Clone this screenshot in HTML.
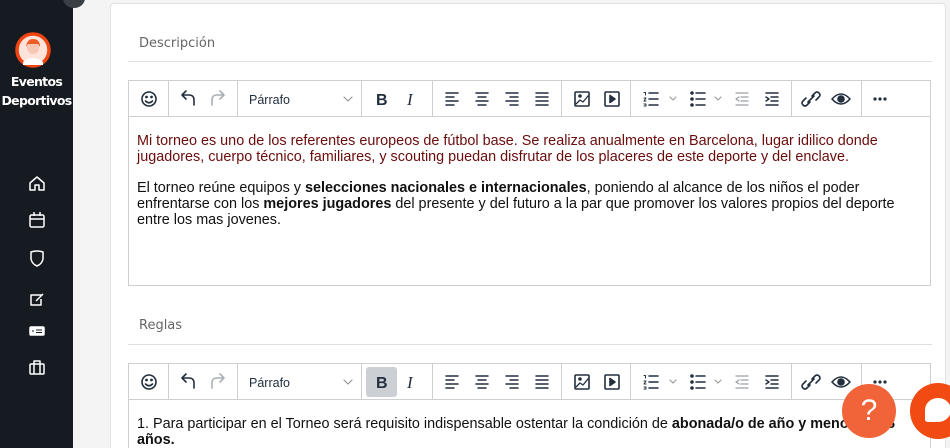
<!DOCTYPE html>
<html style="overflow:hidden;height:448px"><head><meta charset="utf-8"><style>
*{margin:0;padding:0;box-sizing:border-box}
body{width:950px;height:448px;overflow:hidden;background:#f4f4f4;font-family:"Liberation Sans",Arial,sans-serif;position:relative}
.side{position:absolute;left:0;top:0;width:73px;height:448px;background:#161b21}
.brand{position:absolute;left:0;width:73px;text-align:center;color:#fff;font-weight:bold;font-size:12.5px;line-height:19px;top:72px;font-family:"DejaVu Sans",sans-serif;letter-spacing:-0.7px}
.card{position:absolute;left:110px;top:3px;width:836px;height:460px;background:#fff;border:1px solid #e2e2e2;border-radius:4px}
.lbl{position:absolute;left:139px;color:#666;font-family:"DejaVu Sans",sans-serif;font-size:13px}
.hr{position:absolute;left:128px;width:804px;height:1px;background:#e0e0e0}
.ed{position:absolute;left:128px;width:803px;border:1px solid #cfcfcf;background:#fff;overflow:hidden}
.tb{height:36px;border-bottom:1px solid #cfcfcf;display:block}
.txt{padding:16px 8px 0 8px;font-size:14.4px;line-height:16px;color:#111}
.txt p{margin-bottom:15px}
.fab{position:absolute;border-radius:50%}
</style></head><body>
<div class="side">
 <div style="position:absolute;left:63px;top:-12px;width:22px;height:20px;border-radius:50%;background:#3a3f45"></div>
 <svg style="position:absolute;left:15px;top:32px" width="36" height="36" viewBox="0 0 36 36">
  <circle cx="18" cy="18" r="16" fill="#fde3da" stroke="#f04510" stroke-width="3.5"/>
  <path d="M8 30 Q18 22 28 30 L28 33 L8 33Z" fill="#fff"/>
  <circle cx="18" cy="16" r="6" fill="#f6c7b5"/>
  <path d="M11 15 Q12 7 18 7 Q25 7 25 15 L23 12 L13 12Z" fill="#f05a25"/>
 </svg>
 <div class="brand">Eventos<br>Deportivos</div>
 <svg style="position:absolute;left:28px;top:174px" width="18" height="205" viewBox="0 0 18 205" fill="none" stroke="#fff" stroke-width="1.5" stroke-linejoin="round">
  <path d="M2 9 L9 3 L16 9 V16 H11 V11 H7 V16 H2Z"/>
  <rect x="2" y="41" width="14" height="12" rx="1.5"/><path d="M2 45 H16 M6 38 V42 M12 38 V42"/>
  <path d="M3 78 Q9 76 15 78 V85 Q14 90 9 92 Q4 90 3 85Z"/>
  <path d="M14 121 H3 V131 H13 V125 M8 127 L15 120"/>
  <rect x="2" y="153" width="14" height="8" rx="1" fill="#fff"/><path d="M8 156H14M8 158.5H14M4 157H6" stroke="#161b21" stroke-width="1"/>
  <rect x="2" y="190" width="14" height="10" rx="1"/><path d="M6 190 V187 H12 V190 M6 190 V200 M12 190 V200"/>
 </svg>
</div>
<div class="card"></div>
<div class="lbl" style="top:36px">Descripción</div>
<div class="hr" style="top:61px"></div>
<div class="lbl" style="top:318px">Reglas</div>
<div class="hr" style="top:344px"></div>

<svg width="0" height="0" style="position:absolute"><defs>
<g id="tb" fill="none" stroke="#222f3e" stroke-width="1.6" stroke-linecap="round" stroke-linejoin="round">
 <g stroke="#cfcfcf" stroke-width="1"><path d="M39.5 0V36M108.5 0V36M232.5 0V36M303.5 0V36M432.5 0V36M501.5 0V36M662.5 0V36M732.5 0V36"/></g>
 <circle cx="20" cy="18" r="7"/><circle cx="17.5" cy="16" r=".6" fill="#222f3e"/><circle cx="22.5" cy="16" r=".6" fill="#222f3e"/><path d="M16.5 20 Q20 23.5 23.5 20"/>
 <path d="M53 14 H60 Q65 14 65 19 V24 M53 14 L57 10 M53 14 L57 18"/>
 <path d="M95 14 H88 Q83 14 83 19 V24 M95 14 L91 10 M95 14 L91 18" stroke="#aab0b6"/>
 <text x="120" y="23" font-family="Liberation Sans,Arial" font-size="12.5" fill="#222f3e" stroke="none">Párrafo</text>
 <path d="M215 16 L219 20 L223 16" stroke="#999" stroke-width="1.2"/>
 <text x="247" y="24" font-family="Liberation Sans,Arial" font-size="16" font-weight="bold" fill="#222f3e" stroke="none">B</text>
 <text x="278" y="24" font-family="Liberation Serif,serif" font-size="17" font-style="italic" fill="#222f3e" stroke="none">I</text>
 <g stroke-width="1.5"><path d="M317 12H329M317 16H325M317 20H329M317 24H325"/>
 <path d="M347 12H359M349 16H357M347 20H359M349 24H357"/>
 <path d="M377 12H389M381 16H389M377 20H389M381 24H389"/>
 <path d="M407 12H419M407 16H419M407 20H419M407 24H419"/></g>
 <rect x="446" y="11" width="14" height="14" rx="1"/><path d="M447 23 L451 19 L454 21 L459 15" stroke-width="1.3"/><circle cx="451" cy="15" r="1" fill="#222f3e"/>
 <rect x="476" y="11" width="14" height="14" rx="1"/><path d="M481 14.5 V21.5 L486 18Z" fill="#222f3e"/>
 <path d="M520 12H529M520 18H529M520 24H529" stroke-width="1.5"/><path d="M515 11.5H516.5V14M515 17H517L515 20H517M515 23H517V25H515" stroke-width="1"/>
 <path d="M541 16 L544 19 L547 16" stroke="#999" stroke-width="1.1"/>
 <path d="M567 12H576M567 18H576M567 24H576" stroke-width="1.5"/><circle cx="563" cy="12" r="1" fill="#222f3e"/><circle cx="563" cy="18" r="1" fill="#222f3e"/><circle cx="563" cy="24" r="1" fill="#222f3e"/>
 <path d="M586 16 L589 19 L592 16" stroke="#999" stroke-width="1.1"/>
 <g stroke="#9aa0a6" stroke-width="1.3"><path d="M607 12H619M612 16H619M612 20H619M607 24H619M610 16 L607 18 L610 20"/></g>
 <path d="M637 12H649M642 16H649M642 20H649M637 24H649M637 16 L640 18 L637 20" stroke-width="1.5"/>
 <path d="M683 15 L686 12 Q688 10 690 12 Q692 14 690 16 L687 19 M681 21 L678 24 Q676 26 674 24 Q672 22 674 20 L677 17 M679 21 L685 15"/>
 <path d="M703 18 Q712 8 721 18 Q712 28 703 18Z"/><circle cx="712" cy="18" r="3" fill="#222f3e"/>
 <g fill="#222f3e" stroke="none"><circle cx="746" cy="18" r="1.6"/><circle cx="751" cy="18" r="1.6"/><circle cx="756" cy="18" r="1.6"/></g>
</g></defs></svg>

<div class="ed" style="top:80px;height:206px">
 <svg class="tb" width="801" height="36"><use href="#tb"/></svg>
 <div class="txt">
  <p style="color:#6b0b0b">Mi torneo es uno de los referentes europeos de fútbol base. Se realiza anualmente en Barcelona, lugar idilico donde jugadores, cuerpo técnico, familiares, y scouting puedan disfrutar de los placeres de este deporte y del enclave.</p>
  <p>El torneo reúne equipos y <b>selecciones nacionales e internacionales</b>, poniendo al alcance de los niños el poder enfrentarse con los <b>mejores jugadores</b> del presente y del futuro a la par que promover los valores propios del deporte entre los mas jovenes.</p>
 </div>
</div>
<div class="ed" style="top:363px;height:100px">
 <svg class="tb" width="801" height="36"><rect x="237" y="3" width="31" height="30" rx="3" fill="#ccd0d4"/><use href="#tb"/></svg>
 <div class="txt">
  <p>1. Para participar en el Torneo será requisito indispensable ostentar la condición de <b>abonada/o de año y menor de 18 años.</b></p>
 </div>
</div>
<div class="fab" style="left:842px;top:384px;width:54px;height:54px;background:#f1643a;color:#fff;font-size:30px;text-align:center;line-height:54px">?</div>
<div class="fab" style="left:910px;top:383px;width:56px;height:56px;background:#f14a12"></div>
<div class="fab" style="left:925px;top:398px;width:26px;height:24px;background:#fff;border-radius:50% 50% 50% 10%"></div>
</body></html>
